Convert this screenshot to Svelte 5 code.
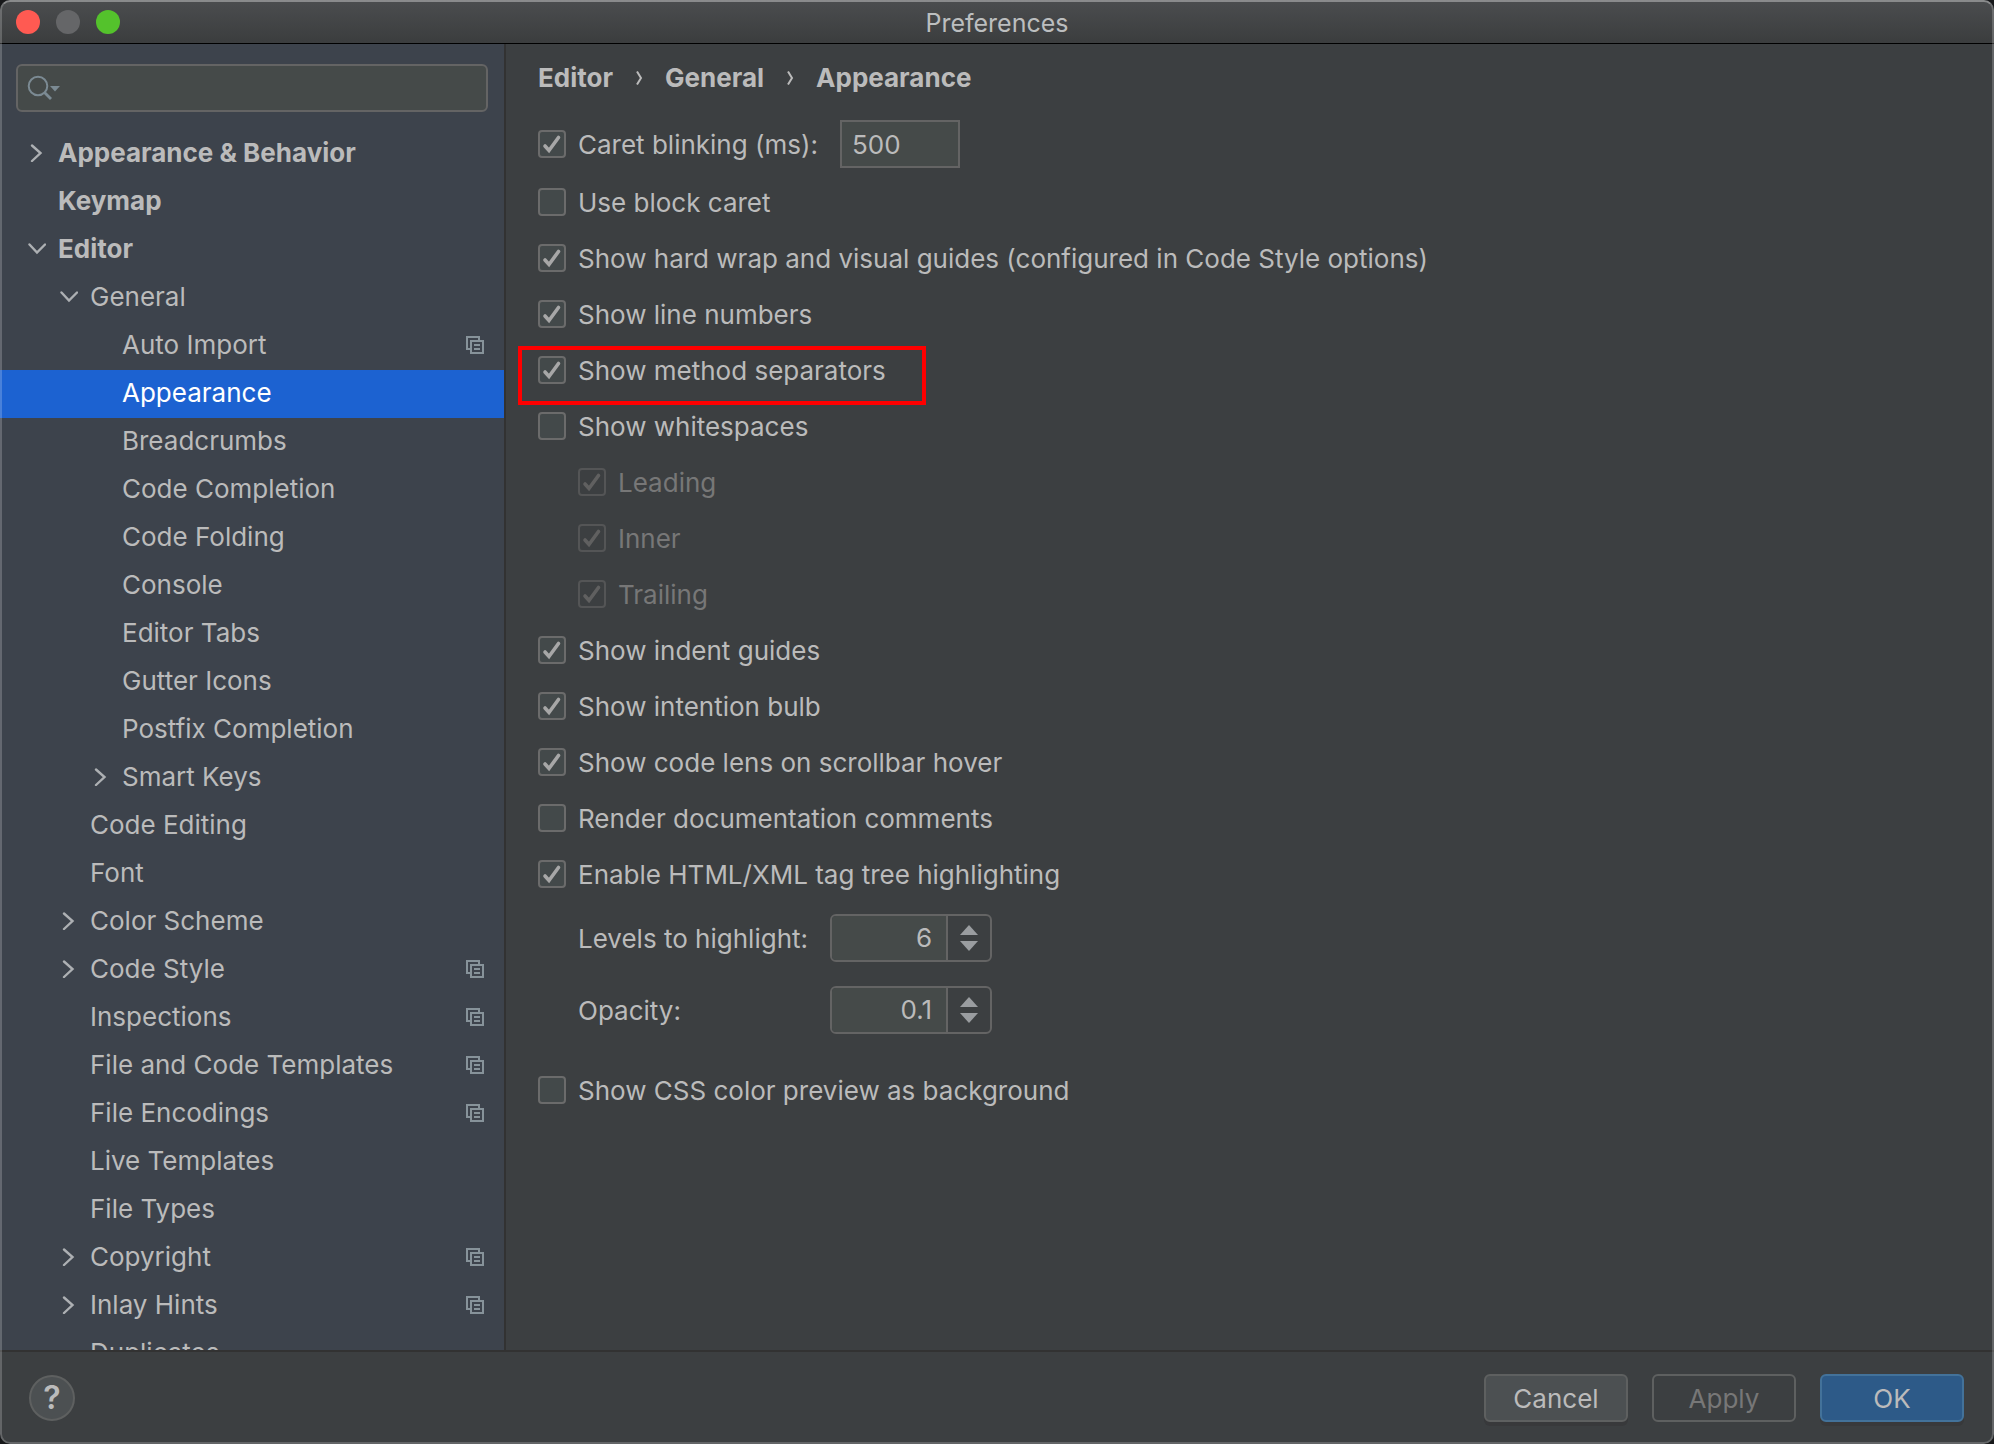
<script>
  const tree = [
    { label: 'Appearance & Behavior', level: 0, arrow: 'right' },
    { label: 'Keymap', level: 0 },
    { label: 'Editor', level: 0, arrow: 'down' },
    { label: 'General', level: 1, arrow: 'down' },
    { label: 'Auto Import', level: 2, project: true },
    { label: 'Appearance', level: 2 },
    { label: 'Breadcrumbs', level: 2 },
    { label: 'Code Completion', level: 2 },
    { label: 'Code Folding', level: 2 },
    { label: 'Console', level: 2 },
    { label: 'Editor Tabs', level: 2 },
    { label: 'Gutter Icons', level: 2 },
    { label: 'Postfix Completion', level: 2 },
    { label: 'Smart Keys', level: 2, arrow: 'right' },
    { label: 'Code Editing', level: 1 },
    { label: 'Font', level: 1 },
    { label: 'Color Scheme', level: 1, arrow: 'right' },
    { label: 'Code Style', level: 1, arrow: 'right', project: true },
    { label: 'Inspections', level: 1, project: true },
    { label: 'File and Code Templates', level: 1, project: true },
    { label: 'File Encodings', level: 1, project: true },
    { label: 'Live Templates', level: 1 },
    { label: 'File Types', level: 1 },
    { label: 'Copyright', level: 1, arrow: 'right', project: true },
    { label: 'Inlay Hints', level: 1, arrow: 'right', project: true },
    { label: 'Duplicates', level: 1 }
  ];

  const chevrons = {
    right: 'M4 1.5L12.5 9L4 17',
    down: 'M1.5 4.5L9 12.5L17 4.5'
  };

  const path = ['Editor', 'General', 'Appearance'];

  let selected = $state('Appearance');
  let search = $state('');
  let blinkRate = $state('500');

  let caretBlinking = $state({ label: 'Caret blinking (ms):', checked: true });
  let options = $state([
    { label: 'Use block caret', checked: false },
    { label: 'Show hard wrap and visual guides (configured in Code Style options)', checked: true },
    { label: 'Show line numbers', checked: true },
    { label: 'Show method separators', checked: true, marked: true },
    { label: 'Show whitespaces', checked: false },
    { label: 'Leading', checked: true, disabled: true },
    { label: 'Inner', checked: true, disabled: true },
    { label: 'Trailing', checked: true, disabled: true },
    { label: 'Show indent guides', checked: true },
    { label: 'Show intention bulb', checked: true },
    { label: 'Show code lens on scrollbar hover', checked: true },
    { label: 'Render documentation comments', checked: false },
    { label: 'Enable HTML/XML tag tree highlighting', checked: true }
  ]);
  let cssPreview = $state({ label: 'Show CSS color preview as background', checked: false });

  let spinners = $state([
    { id: 'levels', label: 'Levels to highlight:', value: 6, step: 1 },
    { id: 'opacity', label: 'Opacity:', value: 0.1, step: 0.1 }
  ]);

  function bump(spinner, direction) {
    const next = spinner.value + direction * spinner.step;
    spinner.value = Math.max(0, Math.round(next * 10) / 10);
  }
</script>

{#snippet check(option)}
  <label class="check" class:disabled={option.disabled} class:marked={option.marked}>
    <span class="box">
      <input type="checkbox" bind:checked={option.checked} disabled={option.disabled} />
      {#if option.checked}
        <svg viewBox="0 0 28 28" aria-hidden="true">
          <path d="M7 16L11 20.5L20.5 7.5" />
        </svg>
      {/if}
    </span>
    <span class="text">{option.label}</span>
  </label>
{/snippet}

<div class="window">
  <header class="titlebar">
    <div class="lights">
      <button class="light close" aria-label="Close"></button>
      <button class="light minimize" aria-label="Minimize" disabled></button>
      <button class="light zoom" aria-label="Zoom"></button>
    </div>
    <h1>Preferences</h1>
  </header>

  <div class="body">
    <aside class="sidebar">
      <div class="search">
        <input type="text" aria-label="Search settings" bind:value={search} />
        <svg width="34" height="26" viewBox="0 0 34 26" aria-hidden="true">
          <circle cx="11" cy="11" r="9.3" />
          <path d="M17.5 17.5L24 24" stroke-width="2.8" />
          <path class="solid" d="M23 11H33L28 16.5Z" />
        </svg>
      </div>

      <ul class="tree">
        {#each tree as item}
          <li>
            <button
              class="node level-{item.level}"
              class:selected={item.level === 2 && item.label === selected}
              onclick={() => (selected = item.label)}
            >
              <span class="arrow">
                {#if item.arrow}
                  <svg width="18" height="18" viewBox="0 0 18 18" aria-hidden="true">
                    <path d={chevrons[item.arrow]} />
                  </svg>
                {/if}
              </span>
              <span class="name">{item.label}</span>
              {#if item.project}
                <svg class="project" width="18" height="18" viewBox="0 0 18 18" aria-hidden="true">
                  <path d="M0 0H14V4H12V2H2V12H4V14H0Z" />
                  <path d="M4 4H18V18H4ZM6 6V16H16V6Z" fill-rule="evenodd" />
                  <path d="M8 8H14V10H8ZM8 12H14V14H8Z" />
                </svg>
              {/if}
            </button>
          </li>
        {/each}
      </ul>
    </aside>

    <main class="content">
      <nav class="crumbs">
        {#each path as crumb, i}
          {#if i > 0}
            <svg width="8" height="14" viewBox="0 0 8 14" aria-hidden="true">
              <path d="M2 0.5L6 7L2 13.5" />
            </svg>
          {/if}
          <span>{crumb}</span>
        {/each}
      </nav>

      <div class="caret-row">
        {@render check(caretBlinking)}
        <input class="field" type="text" aria-label="Caret blinking period" bind:value={blinkRate} />
      </div>

      {#each options as option}
        {@render check(option)}
      {/each}

      <div class="spinners">
        {#each spinners as spinner}
          <label class="text" for={spinner.id}>{spinner.label}</label>
          <div class="spinner">
            <input id={spinner.id} type="number" step={spinner.step} bind:value={spinner.value} />
            <div class="steps">
              <button aria-label="Increase {spinner.id}" onclick={() => bump(spinner, 1)}>
                <svg width="18" height="10" viewBox="0 0 18 10"><path d="M0 10L9 0L18 10Z" /></svg>
              </button>
              <button aria-label="Decrease {spinner.id}" onclick={() => bump(spinner, -1)}>
                <svg width="18" height="10" viewBox="0 0 18 10"><path d="M0 0H18L9 10Z" /></svg>
              </button>
            </div>
          </div>
        {/each}
      </div>

      {@render check(cssPreview)}
    </main>
  </div>

  <footer class="footer">
    <button class="help" aria-label="Help">?</button>
    <div class="actions">
      <button class="btn">Cancel</button>
      <button class="btn" disabled>Apply</button>
      <button class="btn primary">OK</button>
    </div>
  </footer>
</div>

<style>
  :global(body) {
    background: #17181a;
  }

  .window,
  .window * {
    box-sizing: border-box;
  }

  .window {
    position: relative;
    display: flex;
    flex-direction: column;
    height: 100vh;
    overflow: hidden;
    border-radius: 10px;
    background: #3c3f41;
    color: #bbbbbb;
    font-family: Inter, 'Liberation Sans', sans-serif;
    font-size: 26px;
    line-height: 32px;
  }

  /* light rim drawn over everything, the selected row included */
  .window::after {
    content: '';
    position: absolute;
    inset: 0;
    border: 2px solid rgba(255, 255, 255, 0.2);
    border-top-color: rgba(255, 255, 255, 0.35);
    border-radius: 10px;
    pointer-events: none;
  }

  button,
  input {
    margin: 0;
    padding: 0;
    border: none;
    outline: none;
    background: none;
    color: inherit;
    font: inherit;
  }

  .titlebar {
    display: grid;
    grid-template-columns: 1fr auto 1fr;
    align-items: center;
    flex: none;
    height: 44px;
    padding: 0 16px;
    border-bottom: 1px solid #000;
    background: linear-gradient(#4b4d4f, #3b3d3e);
  }

  .titlebar h1 {
    margin: 0;
    padding-top: 2px;
    font-size: 25px;
    font-weight: 400;
    color: #bcbebf;
  }

  .lights {
    display: flex;
    gap: 16px;
  }

  .light {
    width: 24px;
    height: 24px;
    border-radius: 50%;
  }

  .close { background: #ff5a52; }
  .minimize { background: #656668; }
  .zoom { background: #54c22c; }

  .body {
    display: flex;
    flex: 1;
    min-height: 0;
  }

  .sidebar {
    display: flex;
    flex-direction: column;
    flex: none;
    width: 506px;
    overflow: hidden;
    border-right: 2px solid #323232;
    background: #3d434c;
  }

  .search {
    position: relative;
    flex: none;
    margin: 20px 16px 18px;
  }

  .search input {
    display: block;
    width: 100%;
    height: 48px;
    padding: 0 12px 0 50px;
    border: 2px solid #646464;
    border-radius: 6px;
    background: #454a49;
  }

  .search svg {
    position: absolute;
    left: 11px;
    top: 11px;
    fill: none;
    stroke: #7b8a93;
    stroke-width: 2;
  }

  .search .solid {
    fill: #7b8a93;
    stroke: none;
  }

  .tree {
    margin: 0;
    padding: 0;
    list-style: none;
  }

  .node {
    display: flex;
    align-items: center;
    width: 100%;
    height: 48px;
    padding: 0 20px 2px 26px;
    text-align: left;
    white-space: nowrap;
  }

  .level-0 { font-weight: 700; }
  .level-1 { padding-left: 58px; }
  .level-2 { padding-left: 90px; }

  .node.selected {
    background: #1c62d1;
    color: #fff;
  }

  .arrow {
    display: flex;
    flex: none;
    width: 32px;
    padding-left: 2px;
  }

  .arrow svg {
    fill: none;
    stroke: #adb0b3;
    stroke-width: 2.4;
    stroke-linecap: round;
  }

  .name {
    flex: 1;
  }

  .project {
    fill: #87939a;
  }

  .content {
    flex: 1;
    min-width: 0;
    padding: 18px 32px;
  }

  .crumbs {
    display: flex;
    align-items: center;
    gap: 22px;
    margin-bottom: 26px;
    font-weight: 700;
  }

  .crumbs svg {
    fill: none;
    stroke: #bbbbbb;
    stroke-width: 2;
  }

  .caret-row {
    display: flex;
    align-items: center;
    gap: 22px;
    height: 48px;
    margin-bottom: 6px;
  }

  .field {
    width: 120px;
    height: 48px;
    padding: 0 10px;
    border: 2px solid #646464;
    background: #454a49;
  }

  .check {
    position: relative;
    display: flex;
    align-items: center;
    gap: 12px;
    width: fit-content;
    height: 56px;
  }

  .text {
    padding-top: 2px;
  }

  .box {
    display: grid;
    flex: none;
    width: 28px;
    height: 28px;
  }

  .box > * {
    grid-area: 1 / 1;
    width: 28px;
    height: 28px;
  }

  .box input {
    appearance: none;
    border: 2px solid #6b6b6b;
    border-radius: 4px;
    background: #43494a;
  }

  .box svg {
    fill: none;
    stroke: #a7a7a7;
    stroke-width: 3.6;
    stroke-linecap: round;
    pointer-events: none;
  }

  .disabled {
    margin-left: 40px;
    color: #777777;
  }

  .disabled .box input {
    border-color: #545556;
    background: none;
  }

  .disabled .box svg {
    stroke: #606060;
  }

  /* red frame round the highlighted option */
  .marked::after {
    content: '';
    position: absolute;
    inset: 4px -40px -7px -20px;
    border: 4px solid #ff0000;
    pointer-events: none;
  }

  .spinners {
    display: grid;
    grid-template-columns: 252px auto;
    row-gap: 24px;
    align-items: center;
    justify-content: start;
    margin: 12px 0 28px 40px;
  }

  .spinner {
    display: flex;
    width: 162px;
    height: 48px;
    overflow: hidden;
    border: 2px solid #646464;
    border-radius: 6px;
  }

  .spinner input {
    flex: 1;
    min-width: 0;
    padding: 0 14px;
    border-right: 2px solid #646464;
    background: #454a49;
    text-align: right;
    appearance: textfield;
  }

  .spinner input::-webkit-inner-spin-button {
    appearance: none;
    margin: 0;
  }

  .steps {
    display: flex;
    flex-direction: column;
    justify-content: center;
    gap: 6px;
    width: 42px;
  }

  .steps button {
    display: flex;
    justify-content: center;
  }

  .steps svg {
    fill: #9a9da0;
  }

  .footer {
    display: flex;
    align-items: center;
    justify-content: space-between;
    flex: none;
    height: 94px;
    padding: 0 30px 0 29px;
    border-top: 2px solid #323232;
  }

  .help {
    width: 46px;
    height: 46px;
    border: 2px solid #5e6060;
    border-radius: 50%;
    background: #4c5052;
    font-size: 32px;
    font-weight: 600;
  }

  .actions {
    display: flex;
    gap: 24px;
  }

  .btn {
    width: 144px;
    height: 48px;
    padding-top: 2px;
    border: 2px solid #5e6060;
    border-radius: 6px;
    background: #4c5052;
    box-shadow: 0 4px 0 #38393b;
  }

  .btn:disabled {
    background: none;
    box-shadow: none;
    color: #777777;
  }

  .btn.primary {
    border-color: #43729a;
    background: #2d5a88;
  }
</style>
